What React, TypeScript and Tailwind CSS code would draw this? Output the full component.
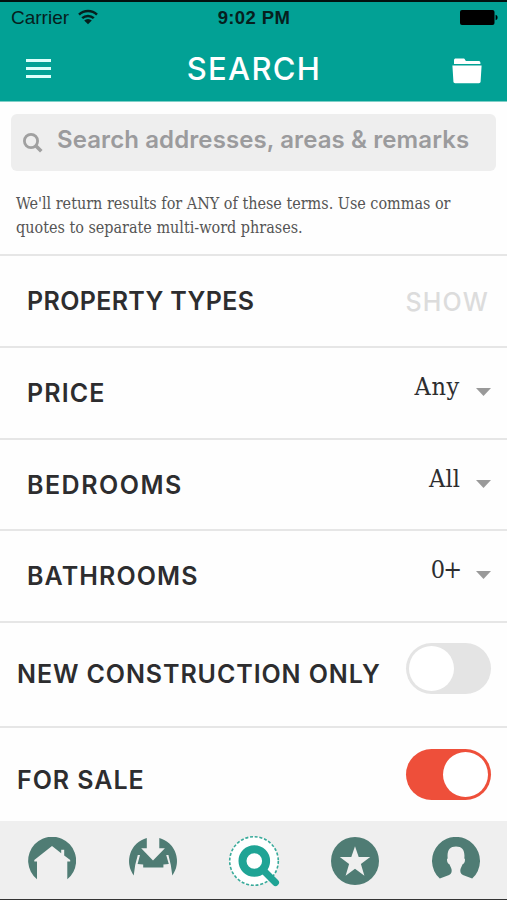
import { useState } from 'react'

const FILTERS = [
  { label: 'PRICE',     value: 'Any', height: 'h-[92px]', spacing: 'tracking-[1.1px]', valueSpacing: 'tracking-[0.7px]' },
  { label: 'BEDROOMS',  value: 'All', height: 'h-[91px]', spacing: 'tracking-[1.5px]', valueSpacing: 'tracking-[0.1px]' },
  { label: 'BATHROOMS', value: '0+',  height: 'h-[92px]', spacing: 'tracking-[1.1px]', valueSpacing: 'tracking-[-2px]' },
]

function WifiIcon() {
  return (
    <svg width="20" height="16" viewBox="0 0 20 16" fill="none" stroke="#06201e" strokeWidth="2.5">
      <path d="M1 5.6a13 13 0 0 1 18 0" />
      <path d="M4.2 9.2a8.4 8.4 0 0 1 11.6 0" />
      <path d="M10 15.2 6.2 11.6a5.2 5.2 0 0 1 7.6 0Z" fill="#06201e" stroke="none" />
    </svg>
  )
}

function BatteryIcon() {
  return (
    <svg width="38" height="15" viewBox="0 0 38 15">
      <rect width="34.5" height="15" rx="2" />
      <path d="M35.6 4.8c2.6.6 2.6 4.8 0 5.4Z" />
    </svg>
  )
}

function FolderIcon() {
  return (
    <svg width="30" height="26" viewBox="0 0 30 26" fill="#fff">
      <path d="M2 6.1V2.4C2 1.2 2.7.6 3.8.6h7.4c1 0 1.6.5 2 1.3l.7 1.1h12.5c1.2 0 2 .7 2 1.7v1.4Z" />
      <path d="M.4 7.4h29.2l-1 16.2c-.1 1.1-.8 1.7-1.8 1.7H3.2c-1 0-1.7-.6-1.8-1.7Z" />
    </svg>
  )
}

function HomeTab() {
  return (
    <svg width="48" height="48" viewBox="0 0 48 48">
      <path fill="#4f7c74" d="M9 42.3V24.5H6.3v-1.6L24 9.1l9.2 7.1v-3.5h3v5.8l6 4.6v1.4h-2.9v17.8A24 24 0 1 0 9 42.3Z" />
    </svg>
  )
}

function InboxTab() {
  return (
    <svg width="48" height="48" viewBox="0 0 48 48" fill="#4f7c74">
      <path d="M17.8 1v10.3h-5.6L24 23.6l11.9-12.3h-5.6V1A24 24 0 0 1 43.3 38.4L41.8 28 39.4 18h-2.2l2.6 9-5.4.6v2.8H14.2v-2.8L8.6 27 11 18H8.8L6.2 28 4.7 38.4A24 24 0 0 1 17.8 1Z" />
    </svg>
  )
}

function SearchTab() {
  return (
    <svg width="52" height="52" viewBox="0 0 52 52">
      <circle cx="26" cy="26" r="24.3" fill="#fff" stroke="#37aa9a" strokeWidth="1.6" strokeDasharray="3 1.77" />
      <circle cx="26.3" cy="26" r="11.8" fill="none" stroke="#1fa495" strokeWidth="8" />
      <path d="m35.5 35.5 12 12" stroke="#1fa495" strokeWidth="7" strokeLinecap="round" />
    </svg>
  )
}

function StarTab() {
  return (
    <svg width="48" height="48" viewBox="0 0 48 48">
      <circle cx="24" cy="24" r="24" fill="#4f7c74" />
      <path fill="#efefef" d="m24 9.2 3.7 10.9h11.5l-9.3 6.8 3.5 11.9-9.4-7.1-9.4 7.1 3.5-11.9-9.3-6.8h11.5Z" />
    </svg>
  )
}

function ProfileTab() {
  return (
    <svg width="48" height="48" viewBox="0 0 48 48">
      <path fill="#4f7c74" d="M7.8 41.6A24 24 0 1 1 40.2 41.6l-8.7-3.4c-3.1-1.2-3.9-4.2-2.6-7.2l1.7-3.8c1.6 0 2.9-3.5 2.2-5.4l-.5-.3c.9-8.2-2-12.1-8.3-12.1s-9.2 3.9-8.3 12.1l-.5.3c-.7 1.9.6 5.4 2.2 5.4l1.7 3.8c1.3 3 .5 6-2.6 7.2Z" />
    </svg>
  )
}

function Toggle({ on, onClick, label }: { on: boolean; onClick: () => void; label: string }) {
  return (
    <button
      type="button"
      role="switch"
      aria-checked={on}
      aria-label={label}
      onClick={onClick}
      className={`flex h-[51px] w-[85px] items-center rounded-full px-[3px] ${on ? 'justify-end bg-[#ee4f3a]' : 'justify-start bg-[#e4e4e4]'}`}
    >
      <span className="size-[45px] rounded-full bg-white" />
    </button>
  )
}

export default function App() {
  const [newOnly, setNewOnly] = useState(false)
  const [forSale, setForSale] = useState(true)

  return (
    <div className="flex h-[900px] w-[507px] flex-col overflow-hidden bg-[#fefefe] font-['Inter',sans-serif] text-[#2d2d2f] whitespace-nowrap">
      {/* Header */}
      <header className="h-[102px] shrink-0 border-t-2 border-b border-t-[#03110f] border-b-[#7fcfc7] bg-[#02a195]">
        <div className="grid h-8 grid-cols-3 items-center pr-[9px] pl-[11px] font-['Liberation_Sans',sans-serif] text-[#06201e]">
          <div className="flex items-center gap-[9px]">
            <span className="text-[19px]">Carrier</span>
            <span className="-mt-0.5"><WifiIcon /></span>
          </div>
          <span className="-mr-1 ml-[-5px] text-center text-[18.5px] font-bold tracking-[0.4px]">9:02 PM</span>
          <div className="-mt-0.5 flex justify-end"><BatteryIcon /></div>
        </div>
        <div className="grid h-[67px] grid-cols-3 items-center pr-[25px] pl-[26px]">
          <button type="button" aria-label="Menu" className="mt-px flex w-[25px] flex-col gap-[5px]">
            <span className="h-[3px] bg-[#dcfffb]" />
            <span className="h-[3px] bg-[#dcfffb]" />
            <span className="h-[3px] bg-[#dcfffb]" />
          </button>
          <h1 className="-mx-2 mt-[3px] text-center text-[31px] font-medium tracking-[1.3px] text-white">SEARCH</h1>
          <button type="button" aria-label="Folders" className="mt-[7px] justify-self-end"><FolderIcon /></button>
        </div>
      </header>

      {/* Search box */}
      <section className="h-[154px] shrink-0 border-b-2 border-[#e6e6e6] px-[11px] pt-3">
        <div className="flex h-[57px] items-center rounded-md bg-[#eeeeee] pl-3 text-[#9b9b9d]">
          <svg width="20" height="20" viewBox="0 0 20 20" fill="none" stroke="#a0a0a0" strokeWidth="2.8">
            <circle cx="8" cy="8" r="6.6" />
            <path d="m12.5 12.5 5.8 5.8" strokeWidth="3.6" />
          </svg>
          <span className="-mt-1.5 ml-[14px] text-[24px] font-semibold tracking-[0.1px]">Search addresses, areas &amp; remarks</span>
        </div>
        <p className="mt-[21px] pl-[5px] font-['DejaVu_Serif_Condensed','DejaVu_Serif',serif] text-[16px] leading-6 text-[#555]">
          <span className="block">We'll return results for ANY of these terms. Use commas or</span>
          <span className="block">quotes to separate multi-word phrases.</span>
        </p>
      </section>

      {/* Filters */}
      <section className="flex h-[92px] shrink-0 items-center justify-between border-b-2 border-[#e6e6e6] pt-0.5 pr-[18px] pl-[27px] text-[25px] font-semibold">
        <span className="tracking-[0.35px]">PROPERTY TYPES</span>
        <button type="button" className="pt-0.5 font-medium tracking-[1.2px] text-[#dcdcdc]">SHOW</button>
      </section>
      {FILTERS.map(f => (
        <section key={f.label} className={`flex shrink-0 items-center border-b-2 border-[#e6e6e6] pt-0.5 pr-4 pl-[27px] text-[25px] font-semibold ${f.height}`}>
          <span className={f.spacing}>{f.label}</span>
          <span className={`mr-4 -mt-3.5 ml-auto font-['DejaVu_Serif_Condensed','DejaVu_Serif',serif] text-[25px] font-normal ${f.valueSpacing}`}>{f.value}</span>
          <svg className="-mt-1" width="15" height="8" viewBox="0 0 15 8" fill="#999"><path d="M0 0h15L7.5 8Z" /></svg>
        </section>
      ))}

      <section className="flex h-[105px] shrink-0 justify-between border-b-2 border-[#e6e6e6] pt-5 pr-4 pl-[17px]">
        <span className="mt-[13px] text-[25px] leading-9 font-semibold tracking-[0.9px]">NEW CONSTRUCTION ONLY</span>
        <Toggle on={newOnly} onClick={() => setNewOnly(!newOnly)} label="New construction only" />
      </section>
      <section className="flex h-[93px] shrink-0 justify-between pt-[21px] pr-4 pl-[17px]">
        <span className="mt-[13px] text-[25px] leading-9 font-semibold tracking-[0.95px]">FOR SALE</span>
        <Toggle on={forSale} onClick={() => setForSale(!forSale)} label="For sale" />
      </section>

      {/* Tab bar */}
      <nav className="grid min-h-0 flex-1 grid-cols-5 items-center justify-items-center border-b border-[#333] bg-[#efefef] pt-0.5 pl-px">
        <HomeTab />
        <InboxTab />
        <SearchTab />
        <StarTab />
        <ProfileTab />
      </nav>
    </div>
  )
}
